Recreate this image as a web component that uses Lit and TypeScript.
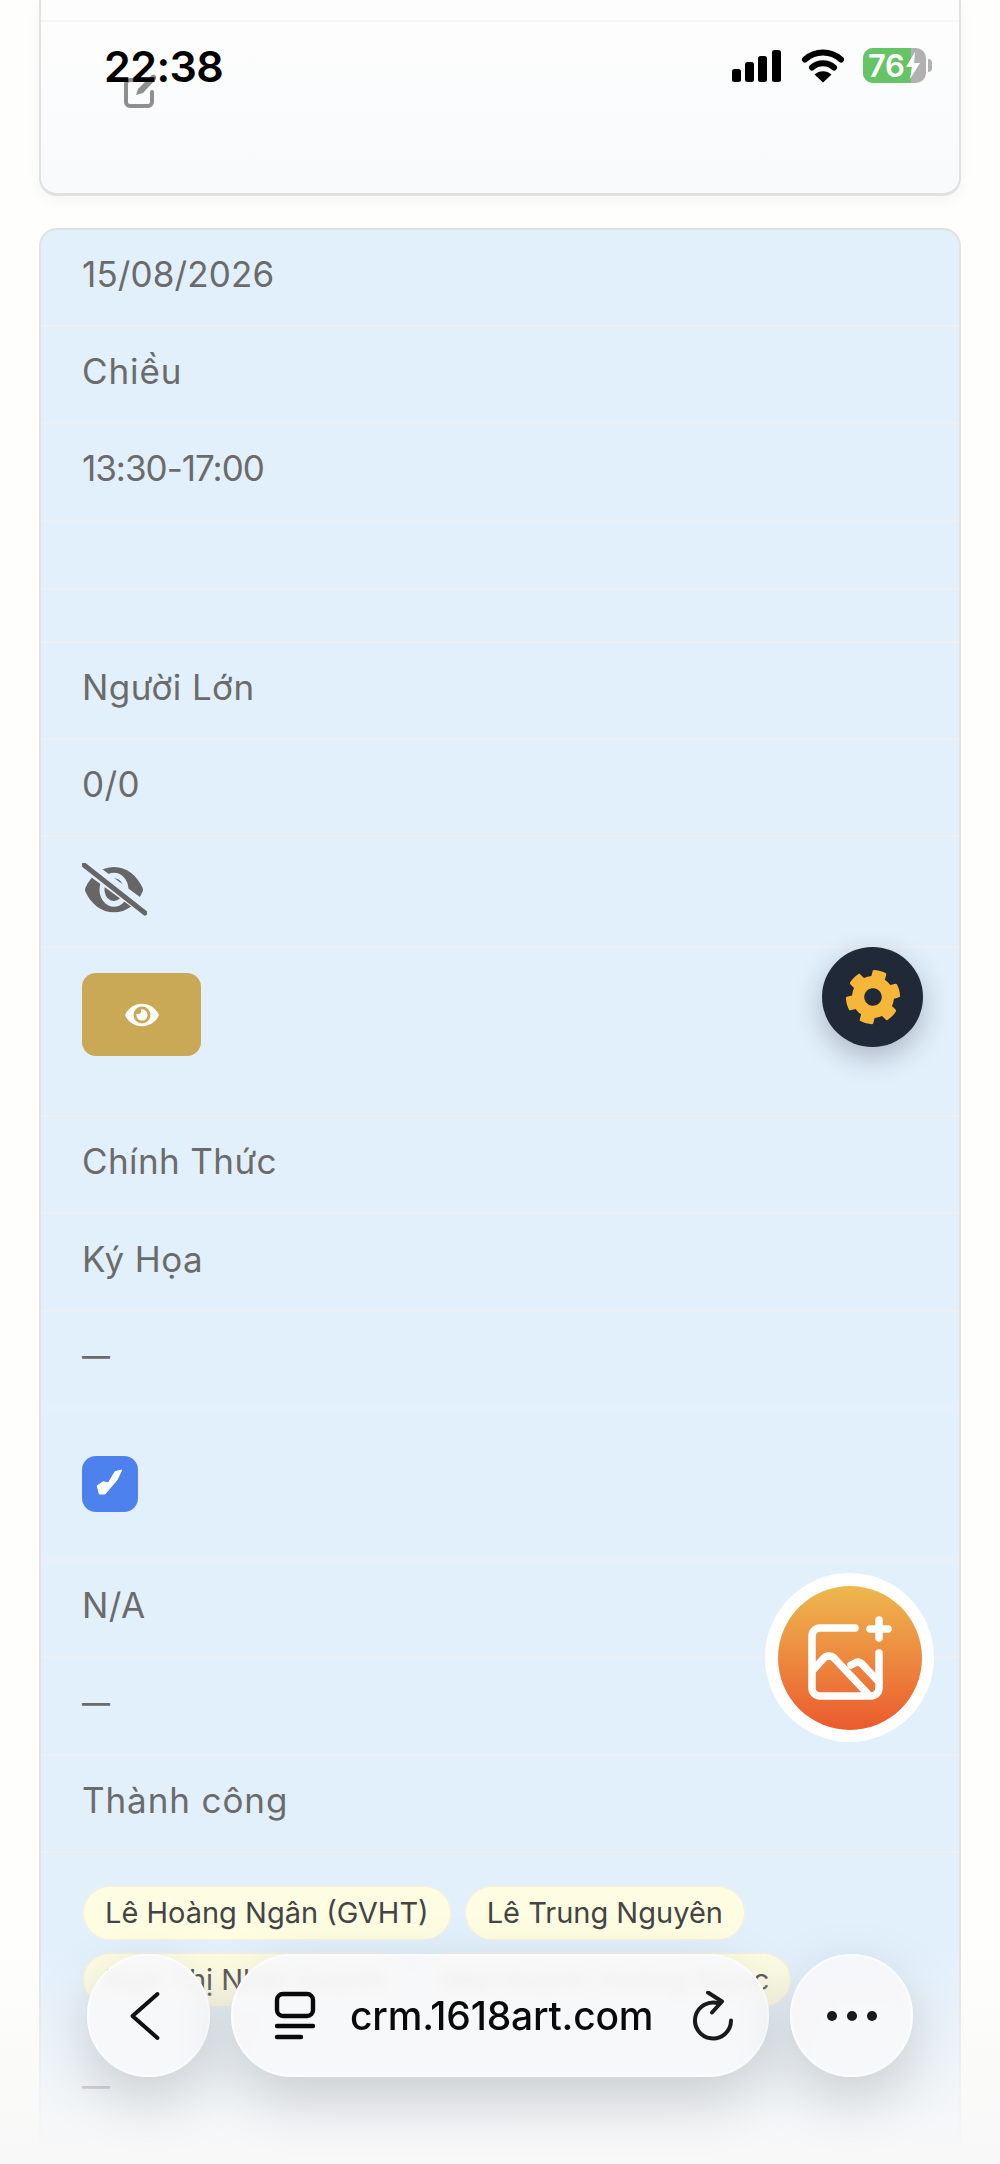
import { LitElement, html, css, svg } from "lit";
import { customElement } from "lit/decorators.js";

const EYE =
  "M572.52 241.4C518.29 135.59 410.93 64 288 64S57.68 135.64 3.48 241.41a32.35 32.35 0 0 0 0 29.19C57.71 376.41 165.07 448 288 448s230.32-71.64 284.52-177.41a32.35 32.35 0 0 0 0-29.19zM288 400a144 144 0 1 1 144-144 143.93 143.93 0 0 1-144 144zm0-240a95.31 95.31 0 0 0-25.31 3.79 47.85 47.85 0 0 1-66.9 66.9A95.78 95.78 0 1 0 288 160z";
const COG =
  "M487.4 315.7l-42.6-24.6c4.3-23.2 4.3-47 0-70.2l42.6-24.6c4.9-2.8 7.1-8.6 5.5-14-11.1-35.6-30-67.8-54.7-94.6-3.8-4.1-10-5.1-14.8-2.3L380.8 110c-17.9-15.4-38.5-27.3-60.8-35.1V25.8c0-5.6-3.9-10.5-9.4-11.7-36.7-8.2-74.3-7.8-109.2 0-5.5 1.2-9.4 6.1-9.4 11.7V75c-22.2 7.9-42.8 19.8-60.8 35.1L88.7 85.5c-4.9-2.8-11-1.9-14.8 2.3-24.7 26.7-43.6 58.9-54.7 94.6-1.7 5.4.6 11.2 5.5 14L67.3 221c-4.3 23.2-4.3 47 0 70.2l-42.6 24.6c-4.9 2.8-7.1 8.6-5.5 14 11.1 35.6 30 67.8 54.7 94.6 3.8 4.1 10 5.1 14.8 2.3l42.6-24.6c17.9 15.4 38.5 27.3 60.8 35.1v49.2c0 5.6 3.9 10.5 9.4 11.7 36.7 8.2 74.3 7.8 109.2 0 5.5-1.2 9.4-6.1 9.4-11.7v-49.2c22.2-7.9 42.8-19.8 60.8-35.1l42.6 24.6c4.9 2.8 11 1.9 14.8-2.3 24.7-26.7 43.6-58.9 54.7-94.6 1.5-5.5-.7-11.3-5.6-14.1zM256 336c-44.1 0-80-35.9-80-80s35.9-80 80-80 80 35.9 80 80-35.9 80-80 80z";

@customElement("app-root")
export class AppRoot extends LitElement {
  static styles = css`
    :host {
      display: block;
      position: relative;
      width: 1000px;
      height: 2164px;
      overflow: hidden;
      background: #fefefc;
      font-family: Inter, "Liberation Sans", sans-serif;
    }
    svg {
      display: block;
    }
    .page {
      display: flex;
      flex-direction: column;
      gap: 32px;
      padding: 0 39px;
    }
    .card {
      box-sizing: border-box;
      border: 2px solid #e1e1e1;
      border-radius: 18px;
    }
    .card-top {
      height: 196px;
      border-top: none;
      border-radius: 0 0 18px 18px;
      border-bottom-width: 3px;
      background: linear-gradient(#fdfdfd, #f9fafc);
      box-shadow: 0 4px 14px rgba(0, 0, 0, 0.04);
    }
    .card-top .head {
      height: 20px;
      border-bottom: 2px solid #f6f6f6;
    }
    .card-top .edit {
      padding: 52px 0 0 83px;
    }
    .card-main {
      height: 2100px;
      background: #e2f0fc;
    }
    .row {
      box-sizing: border-box;
      height: 97.3px;
      padding: 0 41px;
      display: flex;
      align-items: center;
      border-bottom: 2px solid #edeff2;
      color: #6b6b6b;
      font-size: 35px;
      line-height: 40px;
      letter-spacing: 0.4px;
    }
    .row span {
      position: relative;
      top: -3.5px;
    }
    .row.first {
      height: 97px;
      letter-spacing: 0.15px;
    }
    .row.tight {
      letter-spacing: -1px;
    }
    .row.wide {
      letter-spacing: 0.9px;
    }
    .row.blank-a {
      height: 68px;
    }
    .row.blank-b {
      height: 53px;
    }
    .row.eye-row {
      height: 111px;
      align-items: flex-start;
      padding-top: 26px;
    }
    .row.button-row {
      height: 169px;
      align-items: flex-start;
      padding-top: 25px;
    }
    .row.check-row {
      height: 152px;
      align-items: flex-start;
      padding-top: 47px;
    }
    .row.chips-row {
      height: 188px;
      align-items: flex-start;
      padding-top: 32px;
      border-bottom: none;
    }
    .eye-btn {
      width: 119px;
      height: 83px;
      border-radius: 14px;
      background: #c9a955;
      display: flex;
      align-items: center;
      justify-content: center;
    }
    .check-btn {
      width: 56px;
      height: 56px;
      border-radius: 14px;
      background: #4d82ee;
    }
    .chips {
      display: flex;
      flex-wrap: wrap;
      gap: 11px 12px;
      width: 860px;
    }
    .chip {
      box-sizing: border-box;
      height: 56px;
      padding: 0 21px;
      display: flex;
      align-items: center;
      border: 2px solid #eef0ea;
      border-radius: 28px;
      background: #fefde2;
      color: #444;
      font-size: 29px;
      letter-spacing: 0;
      white-space: nowrap;
    }
    .row span.dash {
      font-size: 28px;
      top: -3px;
      font-weight: 500;
    }

    .status {
      position: absolute;
      left: 0;
      top: 0;
      width: 1000px;
      height: 100px;
    }
    .time {
      position: absolute;
      left: 104px;
      top: 40px;
      color: #000;
      font-size: 43px;
      line-height: 52px;
      font-weight: 600;
      letter-spacing: -0.6px;
    }
    .status-icons {
      position: absolute;
      left: 728px;
      top: 44px;
    }
    .battery {
      position: absolute;
      left: 863px;
      top: 48px;
      width: 63px;
      height: 35px;
      border-radius: 10px;
      overflow: hidden;
      background: #b1b1b1;
    }
    .battery .level {
      height: 100%;
      width: 48px;
      background: #65c466;
      color: #fff;
      font-size: 31px;
      line-height: 35px;
      font-weight: 600;
      padding-left: 5px;
      box-sizing: border-box;
      letter-spacing: -0.5px;
    }
    .battery svg {
      position: absolute;
      left: 42px;
      top: 4px;
    }
    .battery-cap {
      position: absolute;
      left: 928px;
      top: 59px;
      width: 4px;
      height: 13px;
      border-radius: 0 4px 4px 0;
      background: #b1b1b1;
    }

    .fab-gear {
      position: absolute;
      left: 822px;
      top: 947px;
      width: 101px;
      height: 100px;
      border-radius: 50%;
      background: #1f2937;
      box-shadow: 0 10px 28px rgba(31, 41, 55, 0.28);
      display: flex;
      align-items: center;
      justify-content: center;
    }
    .fab-gear svg {
      transform: rotate(15deg);
    }
    .fab-photo {
      position: absolute;
      left: 765px;
      top: 1573px;
      width: 169px;
      height: 169px;
      box-sizing: border-box;
      padding: 12.5px;
      border-radius: 50%;
      background: #fff;
    }
    .fab-photo .inner {
      width: 144px;
      height: 144px;
      border-radius: 50%;
      background: linear-gradient(#eeb84f, #eb5a2e);
    }

    .fade {
      position: absolute;
      left: 0;
      right: 0;
      top: 1950px;
      height: 214px;
      background: linear-gradient(rgba(248, 248, 248, 0), rgba(248, 248, 248, 0.55) 45%, rgba(248, 248, 248, 1) 95%);
    }
    .bar {
      position: absolute;
      left: 87px;
      top: 1954px;
      display: flex;
      gap: 21px;
    }
    .pill {
      box-sizing: border-box;
      height: 123px;
      border: 2px solid #fbfcfd;
      border-radius: 62px;
      background: rgba(247, 248, 250, 0.93);
      backdrop-filter: blur(7px);
      box-shadow: 0 22px 60px rgba(0, 0, 0, 0.17);
      display: flex;
      align-items: center;
      justify-content: center;
    }
    .pill.round {
      width: 123px;
    }
    .pill.url {
      width: 538px;
      padding: 0 34px 0 40px;
      justify-content: flex-start;
    }
    .url-text {
      margin: 0 0 0 33px;
      flex: 1;
      color: #0a0a0a;
      font-size: 39px;
      font-weight: 500;
      letter-spacing: -0.2px;
      white-space: nowrap;
    }
  `;

  private textRow(label: string, extra = "") {
    return html`<div class="row ${extra}"><span>${label}</span></div>`;
  }

  private dashRow() {
    return html`<div class="row"><span class="dash">—</span></div>`;
  }

  private editIcon() {
    return html`<svg width="36" height="34" viewBox="0 0 36 34" fill="none">
      <path d="M16 6H6a4 4 0 0 0-4 4v18a4 4 0 0 0 4 4h18a4 4 0 0 0 4-4V18" stroke="#8f8f8f" stroke-width="4" stroke-linecap="round" />
      <path d="M12 21l2-6L28 1c3-1 5 1 4 4L19 19z" fill="#8f8f8f" />
    </svg>`;
  }

  private slashedEye() {
    return html`<svg width="65" height="53" viewBox="0 0 65 53">
      <path transform="translate(3 4) scale(0.1007 0.118) translate(0 -64)" d="${EYE}" fill="#666" />
      <path d="M2 5L63 50" stroke="#e2f0fc" stroke-width="13" transform="translate(3 -2)" />
      <path d="M2 2L63 50" stroke="#666" stroke-width="5" stroke-linecap="round" />
    </svg>`;
  }

  private statusIcons() {
    return html`<svg width="120" height="44" viewBox="0 0 120 44">
      ${[
        [4, 25, 13],
        [17, 18, 20],
        [30, 12, 26],
        [44, 6, 32],
      ].map(
        ([x, y, h]) =>
          svg`<rect x="${x}" y="${y}" width="9" height="${h}" rx="2.5" fill="#000" />`
      )}
      <path d="M77 15.5a27 27 0 0 1 36 0" stroke="#000" stroke-width="6" fill="none" stroke-linecap="round" />
      <path d="M84 23.5a16.5 16.5 0 0 1 22 0" stroke="#000" stroke-width="6" fill="none" stroke-linecap="round" />
      <path d="M95 38.5L86.5 30.5a12.5 12.5 0 0 1 17 0z" fill="#000" />
    </svg>`;
  }

  private photoIcon() {
    return html`<svg width="144" height="144" viewBox="0 0 144 144" fill="none" stroke="#fff" stroke-width="7.5" stroke-linecap="round" stroke-linejoin="round">
      <path d="M77 42H42a8 8 0 0 0-8 8v52a8 8 0 0 0 8 8h51a8 8 0 0 0 8-8V67" />
      <path d="M35 84l11-12a7 7 0 0 1 10 0l33 35" />
      <path d="M73 79l4-2a6 6 0 0 1 7 1l17 18" />
      <path d="M92 43h18M101 34v18" />
    </svg>`;
  }

  render() {
    return html`
      <div class="page">
        <div class="card card-top">
          <div class="head"></div>
          <div class="edit">${this.editIcon()}</div>
        </div>
        <div class="card card-main">
          ${this.textRow("15/08/2026", "first")} ${this.textRow("Chiều", "wide")} ${this.textRow("13:30-17:00", "tight")}
          <div class="row blank-a"></div>
          <div class="row blank-b"></div>
          ${this.textRow("Người Lớn")} ${this.textRow("0/0")}
          <div class="row eye-row">${this.slashedEye()}</div>
          <div class="row button-row">
            <div class="eye-btn">
              <svg width="38" height="30" viewBox="0 0 576 512" fill="#fff"><path d="${EYE}" /></svg>
            </div>
          </div>
          ${this.textRow("Chính Thức")} ${this.textRow("Ký Họa")} ${this.dashRow()}
          <div class="row check-row">
            <div class="check-btn">
              <svg width="56" height="56" viewBox="0 0 56 56">
                <path d="M39.7 14L33 15.7 26.3 27 21.3 25.7 15.3 29.7 17.3 38 23 38 35 24z" fill="#fff" stroke="#fff" stroke-width="1" stroke-linejoin="round" />
              </svg>
            </div>
          </div>
          ${this.textRow("N/A")} ${this.dashRow()} ${this.textRow("Thành công", "wide")}
          <div class="row chips-row">
            <div class="chips">
              <div class="chip">Lê Hoàng Ngân (GVHT)</div>
              <div class="chip">Lê Trung Nguyên</div>
              <div class="chip">Ngô Thị Nhật Quỳnh</div>
              <div class="chip">Mai Huỳnh Hoàng Ngọc</div>
            </div>
          </div>
          ${this.dashRow()}
        </div>
      </div>

      <div class="fab-gear">
        <svg width="56" height="56" viewBox="0 0 512 512"><path d="${COG}" fill="#f5b63a" /></svg>
      </div>
      <div class="fab-photo"><div class="inner">${this.photoIcon()}</div></div>

      <div class="fade"></div>
      <div class="bar">
        <div class="pill round">
          <svg width="40" height="56" viewBox="0 0 40 56" fill="none" stroke="#111" stroke-width="4" stroke-linecap="round" stroke-linejoin="round">
            <path d="M28.5 6L3.5 28l25 22" />
          </svg>
        </div>
        <div class="pill url">
          <svg width="44" height="52" viewBox="0 0 44 52" fill="none" stroke="#0a0a0a" stroke-width="4.4" stroke-linecap="round">
            <rect x="4" y="4" width="36" height="22" rx="6" />
            <path d="M4 36h36M4 47h24" />
          </svg>
          <div class="url-text">crm.1618art.com</div>
          <svg width="44" height="50" viewBox="0 0 44 50" fill="none" stroke="#1a1a1a" stroke-width="4" stroke-linecap="round" stroke-linejoin="round">
            <path d="M30 12.5A18 18 0 1 0 42 29.5" />
            <path d="M19 1.5L33 10.5 23 21.5" />
          </svg>
        </div>
        <div class="pill round">
          <svg width="60" height="14" viewBox="0 0 60 14" fill="#1a1a1a">
            <circle cx="10" cy="7" r="5" /><circle cx="30" cy="7" r="5" /><circle cx="50" cy="7" r="5" />
          </svg>
        </div>
      </div>

      <div class="status">
        <div class="time">22:38</div>
        <div class="status-icons">${this.statusIcons()}</div>
        <div class="battery">
          <div class="level">76</div>
          <svg width="16" height="27" viewBox="0 0 16 27"><path d="M10 0L1 15h6l-2 12 10-16H9z" fill="#fff" /></svg>
        </div>
        <div class="battery-cap"></div>
      </div>
    `;
  }
}
